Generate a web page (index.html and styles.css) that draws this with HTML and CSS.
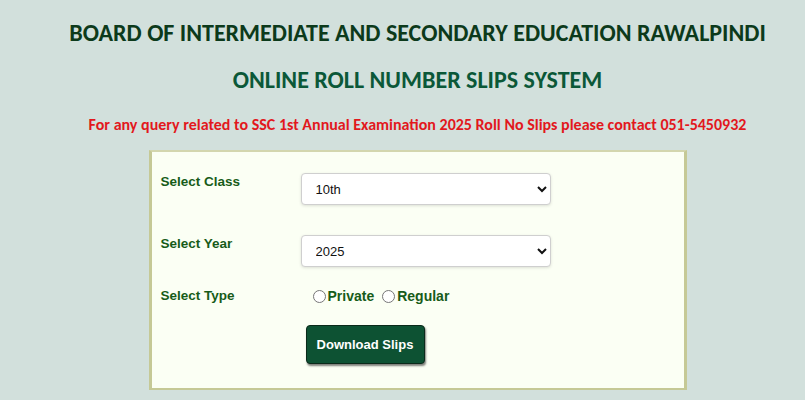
FILE: index.html
```html
<!DOCTYPE html>
<html lang="en">
<head>
<meta charset="utf-8">
<title>BISE Rawalpindi - Online Roll Number Slips System</title>
<link rel="stylesheet" href="styles.css">
</head>
<body>
<div class="page">
  <h1 class="title">BOARD OF INTERMEDIATE AND SECONDARY EDUCATION RAWALPINDI</h1>
  <h2 class="subtitle">ONLINE ROLL NUMBER SLIPS SYSTEM</h2>
  <p class="notice">For any query related to SSC 1st Annual Examination 2025 Roll No Slips please contact 051-5450932</p>
  <form class="panel">
    <div class="row row-class">
      <label class="label" for="cls">Select Class</label>
      <select id="cls" class="select"><option>10th</option><option>9th</option></select>
    </div>
    <div class="row row-year">
      <label class="label" for="yr">Select Year</label>
      <select id="yr" class="select"><option>2025</option><option>2024</option></select>
    </div>
    <div class="row row-type">
      <span class="label">Select Type</span>
      <div class="radios">
        <label class="radio"><input type="radio" name="type">Private</label>
        <label class="radio"><input type="radio" name="type">Regular</label>
      </div>
    </div>
    <div class="row row-btn">
      <span class="label"></span>
      <button type="button" class="btn">Download Slips</button>
    </div>
  </form>
</div>
</body>
</html>
```

FILE: styles.css
```css
html, body {
  margin: 0;
  padding: 0;
  background: #d2e0dc;
}
.page {
  padding: 19px 0 0 30px;
}
.title, .subtitle, .notice {
  font-family: Carlito, Calibri, "Open Sans", "Liberation Sans", sans-serif;
  font-weight: bold;
  text-align: center;
  margin: 0;
}
.title {
  font-size: 24px;
  line-height: 28px;
  color: #0c3a1b;
}
.subtitle {
  margin-top: 19px;
  font-size: 24px;
  line-height: 28px;
  color: #0b5838;
}
.notice {
  margin-top: 21px;
  font-size: 16px;
  line-height: 20px;
  color: #e2181d;
}
.panel {
  box-sizing: border-box;
  width: 538px;
  margin: 15px auto 0;
  background: #fbfff4;
  border-style: solid;
  border-color: #d3d6ae #c5c996 #c5c996 #c5c996;
  border-width: 2px 3px 2px 3px;
  padding: 21px 0 24px 9px;
  font-family: "Liberation Sans", Arial, sans-serif;
}
.row {
  display: flex;
  align-items: flex-start;
}
.label {
  width: 140px;
  flex: none;
  font-size: 13.5px;
  line-height: 16px;
  font-weight: bold;
  color: #175c19;
  padding-top: 1px;
}
.select {
  box-sizing: border-box;
  width: 250px;
  height: 32px;
  padding: 0 10px;
  font-family: "Liberation Sans", Arial, sans-serif;
  font-size: 13px;
  color: #111;
  background: #fff;
  border: 1px solid #cfcfcf;
  border-radius: 4px;
  box-shadow: 0 1px 3px rgba(0,0,0,0.12);
}
.row-class { margin-bottom: 30px; }
.row-year { margin-bottom: 20px; }
.row-type { margin-bottom: 21px; }
.radios {
  display: flex;
  padding-left: 7px;
  padding-top: 1px;
}
.radio {
  display: flex;
  align-items: center;
  font-size: 14px;
  line-height: 16px;
  font-weight: bold;
  color: #175c19;
  margin-right: 3px;
}
.radio input {
  margin: 1px 2px 0 5px;
  width: 13px;
  height: 13px;
}
.btn {
  margin-left: 5px;
  box-sizing: border-box;
  width: 119px;
  height: 39px;
  background: #0d5233;
  color: #fff;
  font-family: "Liberation Sans", Arial, sans-serif;
  font-size: 13px;
  font-weight: bold;
  border: 1px solid #0a2a1a;
  border-radius: 4px;
  box-shadow: 1px 2px 2px rgba(0,0,0,0.5);
  padding: 0;
}
```
